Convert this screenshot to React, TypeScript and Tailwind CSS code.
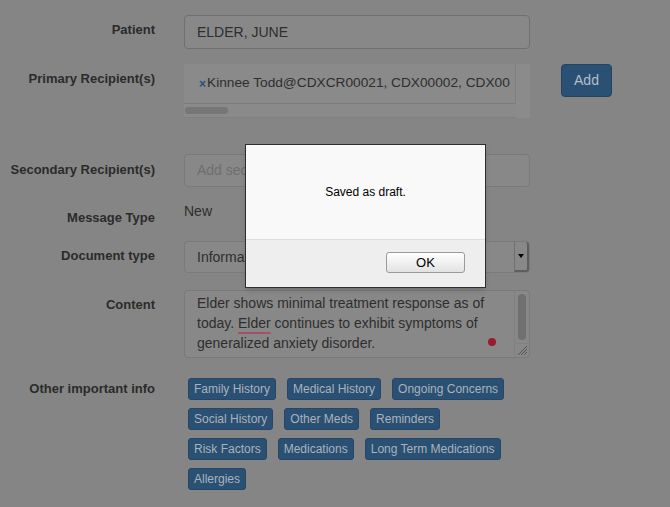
import React from 'react'

const TAG_ROWS = [
  ['Family History', 'Medical History', 'Ongoing Concerns'],
  ['Social History', 'Other Meds', 'Reminders'],
  ['Risk Factors', 'Medications', 'Long Term Medications'],
  ['Allergies'],
]

function Label({ children, pt = 'pt-[7px]' }: { children: React.ReactNode; pt?: string }) {
  return (
    <div className={`w-[155px] shrink-0 text-right text-[13px] leading-4 font-bold text-[#2b2b2b] ${pt}`}>
      {children}
    </div>
  )
}

function Tag({ text }: { text: string }) {
  return (
    <span className="h-[22px] px-[5px] flex items-center rounded-[3px] bg-[#2a5073] border border-[#24476a] text-[12px] text-[#aab2bb]">
      {text}
    </span>
  )
}

export default function App() {
  return (
    <div
      className="relative w-[670px] h-[507px] overflow-hidden bg-[#858585]"
      style={{ fontFamily: '"Liberation Sans", Arial, sans-serif' }}
    >
      <div className="flex flex-col">
        {/* Patient */}
        <div className="flex gap-[29px] mt-[15px]">
          <Label>Patient</Label>
          <div className="w-[346px] h-[34px] rounded-[4px] border border-[#707070] bg-[#888888] px-[12px] flex items-center text-[14px] text-[#2e2e2e]">
            ELDER, JUNE
          </div>
        </div>

        {/* Primary recipients */}
        <div className="flex gap-[29px] mt-[15px]">
          <Label>Primary Recipient(s)</Label>
          <div className="w-[346px] flex">
            <div className="w-[332px] flex flex-col bg-[#8a8a8a]">
              <div className="h-[40px] border-b border-[#7d7d7d] border-r border-r-[#808080] flex items-center pl-[15px] overflow-hidden whitespace-nowrap text-[13.7px] text-[#2e2e2e]">
                <span className="text-[#2a5073] text-[12px] font-bold mr-[1px]">×</span>
                Kinnee Todd@CDXCR00021, CDX00002, CDX00
              </div>
              <div className="h-[14px] flex items-center pl-[1px] border-b border-[#808080]">
                <div className="w-[43px] h-[7px] rounded-full bg-[#767676]" />
              </div>
            </div>
            <div className="w-[14px] h-[54px] bg-[#8b8b8b]" />
          </div>
          <button className="ml-[2px] w-[51px] h-[33px] rounded-[4px] bg-[#2a5073] border border-[#22445f] text-[14px] text-[#b5bec8]">
            Add
          </button>
        </div>

        {/* Secondary recipients */}
        <div className="flex gap-[29px] mt-[36px]">
          <Label pt="pt-[8px]">Secondary Recipient(s)</Label>
          <div className="w-[346px] h-[33px] rounded-[4px] border border-[#7a7a7a] bg-[#888888] px-[12px] flex items-center text-[14px] text-[#6e6e6e]">
            Add secondary recipients
          </div>
        </div>

        {/* Message type */}
        <div className="flex gap-[29px] mt-[16px] h-[38px]">
          <Label>Message Type</Label>
          <div className="text-[14px] leading-4 text-[#2e2e2e]">New</div>
        </div>

        {/* Document type */}
        <div className="flex gap-[29px]">
          <Label>Document type</Label>
          <div className="w-[346px] h-[32px] rounded-[4px] border border-[#7a7a7a] bg-[#888888] flex">
            <div className="flex-1 px-[12px] flex items-center text-[14px] text-[#2e2e2e]">
              Information Request
            </div>
            <div className="w-[15px] h-full border-l border-[#6f6f6f] border-r-2 border-b-2 border-r-[#5e5e5e] border-b-[#5e5e5e] rounded-r-[3px] flex items-center justify-center">
              <div className="w-0 h-0 border-l-[3px] border-r-[3px] border-t-[4px] border-l-transparent border-r-transparent border-t-black" />
            </div>
          </div>
        </div>

        {/* Content */}
        <div className="flex gap-[29px] mt-[17px]">
          <Label>Content</Label>
          <div className="relative w-[346px] h-[68px] rounded-[4px] border border-[#7a7a7a] bg-[#888888] flex">
            <div className="flex-1 pl-[12px] pt-[2px] text-[14px] leading-5 text-[#2e2e2e]">
              Elder shows minimal treatment response as of
              <br />
              today.{' '}
              <span className="underline decoration-[#a5506a] decoration-2 underline-offset-[4px]">Elder</span>{' '}
              continues to exhibit symptoms of
              <br />
              generalized anxiety disorder.
            </div>
            <div className="absolute left-[303px] top-[47px] w-[8px] h-[8px] rounded-full bg-[#9a1a2e]" />
            <div className="w-[15px] flex flex-col border-l border-[#808080]">
              <div className="flex-1 flex justify-center pt-[3px] pb-[3px]">
                <div className="w-[8px] h-[46px] rounded-full bg-[#707070]" />
              </div>
              <div className="h-[15px] border-t border-[#808080] flex items-end justify-end p-[1px]">
                <svg width="11" height="11" viewBox="0 0 11 11">
                  <path d="M1 10 L10 1 M4 10 L10 4 M7 10 L10 7" stroke="#555" strokeWidth="1" />
                </svg>
              </div>
            </div>
          </div>
        </div>

        {/* Other important info */}
        <div className="flex gap-[29px] mt-[20px]">
          <Label pt="pt-[3px]">Other important info</Label>
          <div className="flex flex-col gap-[8px] pl-[4px]">
            {TAG_ROWS.map((row, i) => (
              <div key={i} className="flex gap-[11px]">
                {row.map(t => (
                  <Tag key={t} text={t} />
                ))}
              </div>
            ))}
          </div>
        </div>
      </div>

      {/* Alert dialog */}
      <div className="absolute left-[245px] top-[144px] w-[241px] h-[144px] border border-[#2e2e2e] bg-[#f9f9f9] flex flex-col shadow-md">
        <div className="h-[94px] flex justify-center pt-[38px] text-[12px] text-black">Saved as draft.</div>
        <div className="flex-1 bg-[#eeeeee] border-t border-[#dedede] flex justify-end items-start pt-[12px] pr-[20px]">
          <button className="w-[79px] h-[21px] rounded-[3px] border border-[#9a9a9a] bg-gradient-to-b from-white to-[#e2e2e2] text-[13px] text-black leading-none">
            OK
          </button>
        </div>
      </div>
    </div>
  )
}
